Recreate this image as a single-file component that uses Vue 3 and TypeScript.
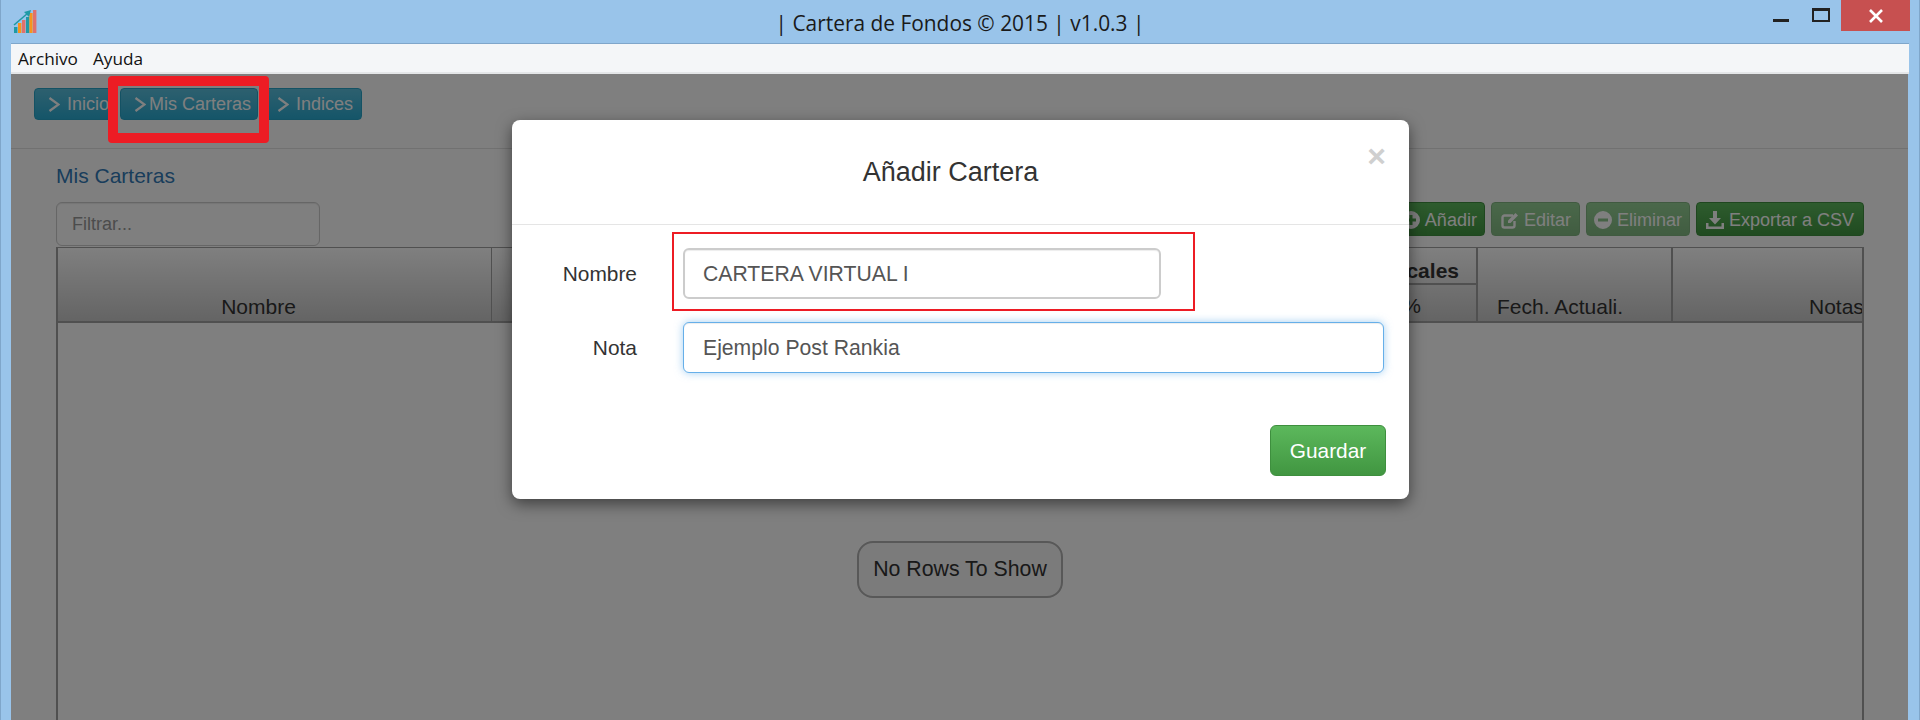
<script setup lang="ts">
const menus: string[] = ['Archivo', 'Ayuda']
const navs = [
  { label: 'Inicio', cls: 'first' },
  { label: 'Mis Carteras', cls: 'tight' },
  { label: 'Indices', cls: '' },
]
</script>

<template>
  <div class="window">
    <header class="titlebar">
      <svg class="logo" width="26" height="26" viewBox="0 0 26 26">
        <rect x="1" y="17" width="3.4" height="6" fill="#1f9aa5" />
        <rect x="5" y="13" width="3.4" height="10" fill="#f7941d" />
        <rect x="9" y="10" width="3.4" height="13" fill="#e0716c" />
        <rect x="13" y="7" width="3.4" height="16" fill="#1f9aa5" />
        <rect x="16.4" y="3" width="3.2" height="20" fill="#f7941d" />
        <rect x="20" y="0" width="3.4" height="23" fill="#e0716c" />
        <path d="M1 15 L15 3" stroke="#1f9aa5" stroke-width="1.6" fill="none" />
        <path d="M11 2 L18 0 L16 7 Z" fill="#1f9aa5" />
      </svg>
      <div class="title">| Cartera de Fondos © 2015 | v1.0.3 |</div>
      <div class="controls">
        <span class="minimize"></span>
        <span class="maximize"></span>
        <span class="close">
          <svg width="14" height="14" viewBox="0 0 14 14">
            <path d="M1 1 L13 13 M13 1 L1 13" stroke="#fff" stroke-width="2.6" />
          </svg>
        </span>
      </div>
    </header>

    <div class="client">
      <nav class="menubar">
        <span v-for="m in menus" :key="m">{{ m }}</span>
      </nav>

      <main class="content">
        <div class="page">
          <div class="navbar">
            <button v-for="n in navs" :key="n.label" class="btn-info" :class="n.cls">
              <svg width="12" height="15" viewBox="0 0 12 15">
                <path d="M1.500 1 L10.500 7.500 L1.500 14" fill="none" stroke="#fff" stroke-width="2.2" />
              </svg>
              {{ n.label }}
            </button>
          </div>

          <section class="section">
            <a class="heading">Mis Carteras</a>
            <div class="toolbar">
              <input class="filter" placeholder="Filtrar..." />
              <div class="actions">
                <button class="btn-success">
                  <svg width="18" height="18" viewBox="0 0 18 18">
                    <path fill="#fff" fill-rule="evenodd" d="M9 0a9 9 0 1 0 0 18A9 9 0 0 0 9 0zM7.500 4h3v3.500H14v3h-3.500V14h-3v-3.500H4v-3h3.500z" />
                  </svg>
                  Añadir
                </button>
                <button class="btn-success disabled edit">
                  <svg width="19" height="18" viewBox="0 0 19 18">
                    <path fill="none" stroke="#fff" stroke-width="2.4" d="M12 4.500H3.500a2 2 0 0 0-2 2v8a2 2 0 0 0 2 2h8a2 2 0 0 0 2-2V10" />
                    <path fill="#fff" d="M7 9.500 14.500 2l2.500 2.500L9.500 12H7z" />
                  </svg>
                  Editar
                </button>
                <button class="btn-success disabled compact">
                  <svg width="18" height="18" viewBox="0 0 18 18">
                    <path fill="#fff" fill-rule="evenodd" d="M9 0a9 9 0 1 0 0 18A9 9 0 0 0 9 0zM4 7.500h10v3H4z" />
                  </svg>
                  Eliminar
                </button>
                <button class="btn-success export">
                  <svg width="18" height="18" viewBox="0 0 18 18">
                    <path fill="#fff" d="M7 0h4v7h4l-6 6.500L3 7h4z" />
                    <path fill="#fff" d="M0 12h2.500v3.500h13V12H18v6H0z" />
                  </svg>
                  Exportar a CSV
                </button>
              </div>
            </div>

            <div class="grid">
              <div class="grid-head">
                <div class="cell col-name">Nombre</div>
                <div class="cell col-hidden"></div>
                <div class="col-group">
                  <div class="group-top">cales</div>
                  <div class="group-sub">%</div>
                </div>
                <div class="cell col-date">Fech. Actuali.</div>
                <div class="cell col-notes">Notas</div>
              </div>
              <div class="grid-body">
                <div class="no-rows">No Rows To Show</div>
              </div>
            </div>
          </section>
        </div>

        <div class="backdrop">
          <div class="modal">
            <div class="modal-header">
              <h4>Añadir Cartera</h4>
              <span class="dismiss">×</span>
            </div>
            <div class="modal-body">
              <label class="field">
                <span class="label">Nombre</span>
                <input class="control short" value="CARTERA VIRTUAL I" />
              </label>
              <label class="field">
                <span class="label">Nota</span>
                <input class="control focus" value="Ejemplo Post Rankia" />
              </label>
            </div>
            <div class="modal-footer">
              <button class="save">Guardar</button>
            </div>
          </div>
        </div>
      </main>
    </div>

    <div class="mark mark-nav"></div>
    <div class="mark mark-field"></div>
  </div>
</template>

<style>
html,
body {
  margin: 0;
  overflow: hidden;
}
</style>

<style scoped>
.window {
  position: relative;
  width: 1920px;
  height: 720px;
  overflow: hidden;
  box-sizing: border-box;
  display: flex;
  flex-direction: column;
  background: #99c4ea;
  border-left: 1px solid #7fa6ca;
  border-right: 1px solid #7fa6ca;
  padding: 0 10px;
  font-family: "Liberation Sans", Arial, sans-serif;
}

.titlebar {
  position: relative;
  flex: none;
  height: 43px;
  display: flex;
  align-items: flex-start;
  justify-content: center;
}
.logo {
  position: absolute;
  left: 2px;
  top: 10px;
}
.title {
  font-family: "Open Sans", sans-serif;
  font-size: 20.9px;
  line-height: 46px;
  color: #1a1a1a;
}
.controls {
  position: absolute;
  right: -1px;
  top: 0;
  display: flex;
  align-items: flex-start;
}
.minimize {
  width: 16px;
  height: 3px;
  background: #222;
  margin-top: 19px;
  margin-right: 23px;
}
.maximize {
  box-sizing: border-box;
  width: 18px;
  height: 14px;
  border: 2px solid #222;
  border-top-width: 3px;
  margin-top: 8px;
  margin-right: 11px;
}
.close {
  width: 69px;
  height: 31px;
  background: #c75050;
  display: flex;
  align-items: center;
  justify-content: center;
}

.client {
  flex: 1;
  min-height: 0;
  display: flex;
  flex-direction: column;
  border-top: 1px solid #7fa6ca;
}
.menubar {
  flex: none;
  height: 28px;
  display: flex;
  gap: 15px;
  padding-left: 7px;
  background: #f4f6f8;
  border-bottom: 2px solid #e4e6e8;
  font-family: "Open Sans", sans-serif;
  font-size: 17.2px;
  line-height: 29px;
  color: #111;
}

.content {
  position: relative;
  flex: 1;
  min-height: 0;
  overflow: hidden;
  margin-right: 1px;
  background: #fff;
}
.page {
  color: #333;
}
.navbar {
  height: 75px;
  box-sizing: border-box;
  padding-top: 14px;
  padding-left: 23px;
  display: flex;
  gap: 5px;
  border-bottom: 1px solid #e2e2e2;
  align-items: flex-start;
}
button {
  font-family: inherit;
  font-size: 18px;
  color: #fff;
  cursor: default;
  display: flex;
  align-items: center;
  white-space: nowrap;
}
.btn-info {
  height: 32px;
  padding: 0 8px 0 13px;
  gap: 7px;
  border: 1px solid #28a4c9;
  border-radius: 4px;
  background: linear-gradient(#5bc0de, #2aabd2);
}
.btn-info.first {
  padding-right: 5px;
}
.btn-info.tight {
  gap: 3px;
  padding-right: 6px;
}

.section {
  padding: 15px 44px 0 45px;
}
.heading {
  display: block;
  font-size: 21px;
  line-height: 24px;
  color: #337ab7;
  margin-bottom: 14px;
}
.toolbar {
  display: flex;
  justify-content: space-between;
  align-items: flex-start;
}
.filter {
  box-sizing: border-box;
  width: 264px;
  height: 44px;
  padding: 0 15px;
  border: 1px solid #ccc;
  border-radius: 6px;
  font-family: inherit;
  font-size: 18px;
  box-shadow: inset 0 1px 1px rgba(0, 0, 0, 0.08);
}
.filter::placeholder {
  color: #999;
}
.actions {
  display: flex;
  gap: 6px;
}
.btn-success {
  height: 34px;
  padding: 2px 7px 0 9px;
  gap: 5px;
  border: 1px solid #3e8f3e;
  border-radius: 4px;
  background: linear-gradient(#5cb85c, #419641);
}
.btn-success.compact {
  padding-left: 7px;
}
.btn-success.edit {
  gap: 4px;
  padding-right: 8px;
}
.btn-success.export {
  padding-right: 9px;
}
.btn-success.disabled {
  opacity: 0.65;
}

.grid {
  margin-top: 1px;
  border: 2px solid #a0a0a0;
  border-width: 1px 2px;
  font-size: 21px;
  color: #333;
}
.grid-head {
  height: 75px;
  box-sizing: border-box;
  display: flex;
  background: linear-gradient(#fff, #c9c9c9);
  border-bottom: 2px solid #a0a0a0;
}
.cell {
  box-sizing: border-box;
  display: flex;
  align-items: flex-end;
  padding-bottom: 2px;
  line-height: 24px;
  border-right: 1px solid #a0a0a0;
}
.col-name {
  width: 434px;
  justify-content: center;
  padding-right: 32px;
}
.col-hidden {
  flex: 1;
}
.col-group {
  width: 190px;
  display: flex;
  flex-direction: column;
  border-right: 2px solid #a0a0a0;
  box-sizing: border-box;
}
.group-top {
  height: 38px;
  box-sizing: border-box;
  border-bottom: 2px solid #a0a0a0;
  font-weight: 700;
  line-height: 45px;
  overflow: hidden;
  text-align: right;
  padding-right: 17px;
}
.group-sub {
  flex: 1;
  text-align: right;
  padding: 6px 55px 0 0;
  line-height: 30px;
}
.col-date {
  width: 195px;
  padding-left: 19px;
  border-right-width: 2px;
}
.col-notes {
  width: 189px;
  border-right: 0;
  padding-left: 136px;
  overflow: hidden;
  white-space: nowrap;
}
.grid-body {
  height: 492px;
  display: flex;
  align-items: center;
  justify-content: center;
}
.no-rows {
  box-sizing: border-box;
  width: 206px;
  height: 57px;
  border: 2px solid #b0b0b0;
  border-radius: 16px;
  background: #f6f6f6;
  font-size: 21.3px;
  display: flex;
  align-items: center;
  justify-content: center;
  white-space: nowrap;
}

.backdrop {
  position: absolute;
  inset: 0;
  background: rgba(0, 0, 0, 0.5);
}
.modal {
  box-sizing: border-box;
  width: 897px;
  height: 379px;
  margin: 46px 0 0 501px;
  background: #fff;
  border-radius: 8px;
  box-shadow: 0 5px 15px rgba(0, 0, 0, 0.5);
  color: #333;
  display: flex;
  flex-direction: column;
}
.modal-header {
  position: relative;
  flex: none;
  height: 105px;
  box-sizing: border-box;
  border-bottom: 1px solid #e5e5e5;
  display: flex;
  align-items: center;
  justify-content: center;
  padding-right: 20px;
}
.modal-header h4 {
  margin: 0;
  font-size: 27px;
  font-weight: 400;
}
.dismiss {
  position: absolute;
  top: 21px;
  right: 23px;
  font-size: 32px;
  font-weight: 700;
  line-height: 30px;
  color: #cfcfcf;
}
.modal-body {
  flex: 1;
  padding-top: 23px;
  display: flex;
  flex-direction: column;
  gap: 23px;
}
.field {
  display: flex;
  align-items: center;
  font-size: 20.9px;
}
.label {
  width: 125px;
  text-align: right;
  margin-right: 46px;
  color: #333;
}
.control {
  box-sizing: border-box;
  width: 701px;
  height: 51px;
  padding: 0 18px 0 19px;
  border: 1px solid #ccc;
  border-radius: 6px;
  font-family: inherit;
  font-size: 21.2px;
  color: #555;
  outline: none;
  box-shadow: inset 0 1px 1px rgba(0, 0, 0, 0.075);
}
.control.short {
  width: 478px;
  border-width: 2px;
  padding-left: 18px;
}
.control.focus {
  border-color: #66afe9;
  box-shadow: inset 0 1px 1px rgba(0, 0, 0, 0.075), 0 0 8px rgba(102, 175, 233, 0.6);
}
.modal-footer {
  flex: none;
  display: flex;
  justify-content: flex-end;
  padding: 0 23px 23px 0;
}
.save {
  box-sizing: border-box;
  width: 116px;
  height: 51px;
  justify-content: center;
  font-size: 20.8px;
  border: 1px solid #3e8f3e;
  border-radius: 6px;
  background: linear-gradient(#5cb85c, #419641);
}

.mark {
  position: absolute;
  box-sizing: border-box;
  border-style: solid;
  border-color: #ed1c24;
}
.mark-nav {
  left: 107px;
  top: 76px;
  width: 161px;
  height: 67px;
  border-width: 10px;
  border-radius: 4px;
}
.mark-field {
  left: 671px;
  top: 232px;
  width: 523px;
  height: 79px;
  border-width: 2px;
}
</style>
